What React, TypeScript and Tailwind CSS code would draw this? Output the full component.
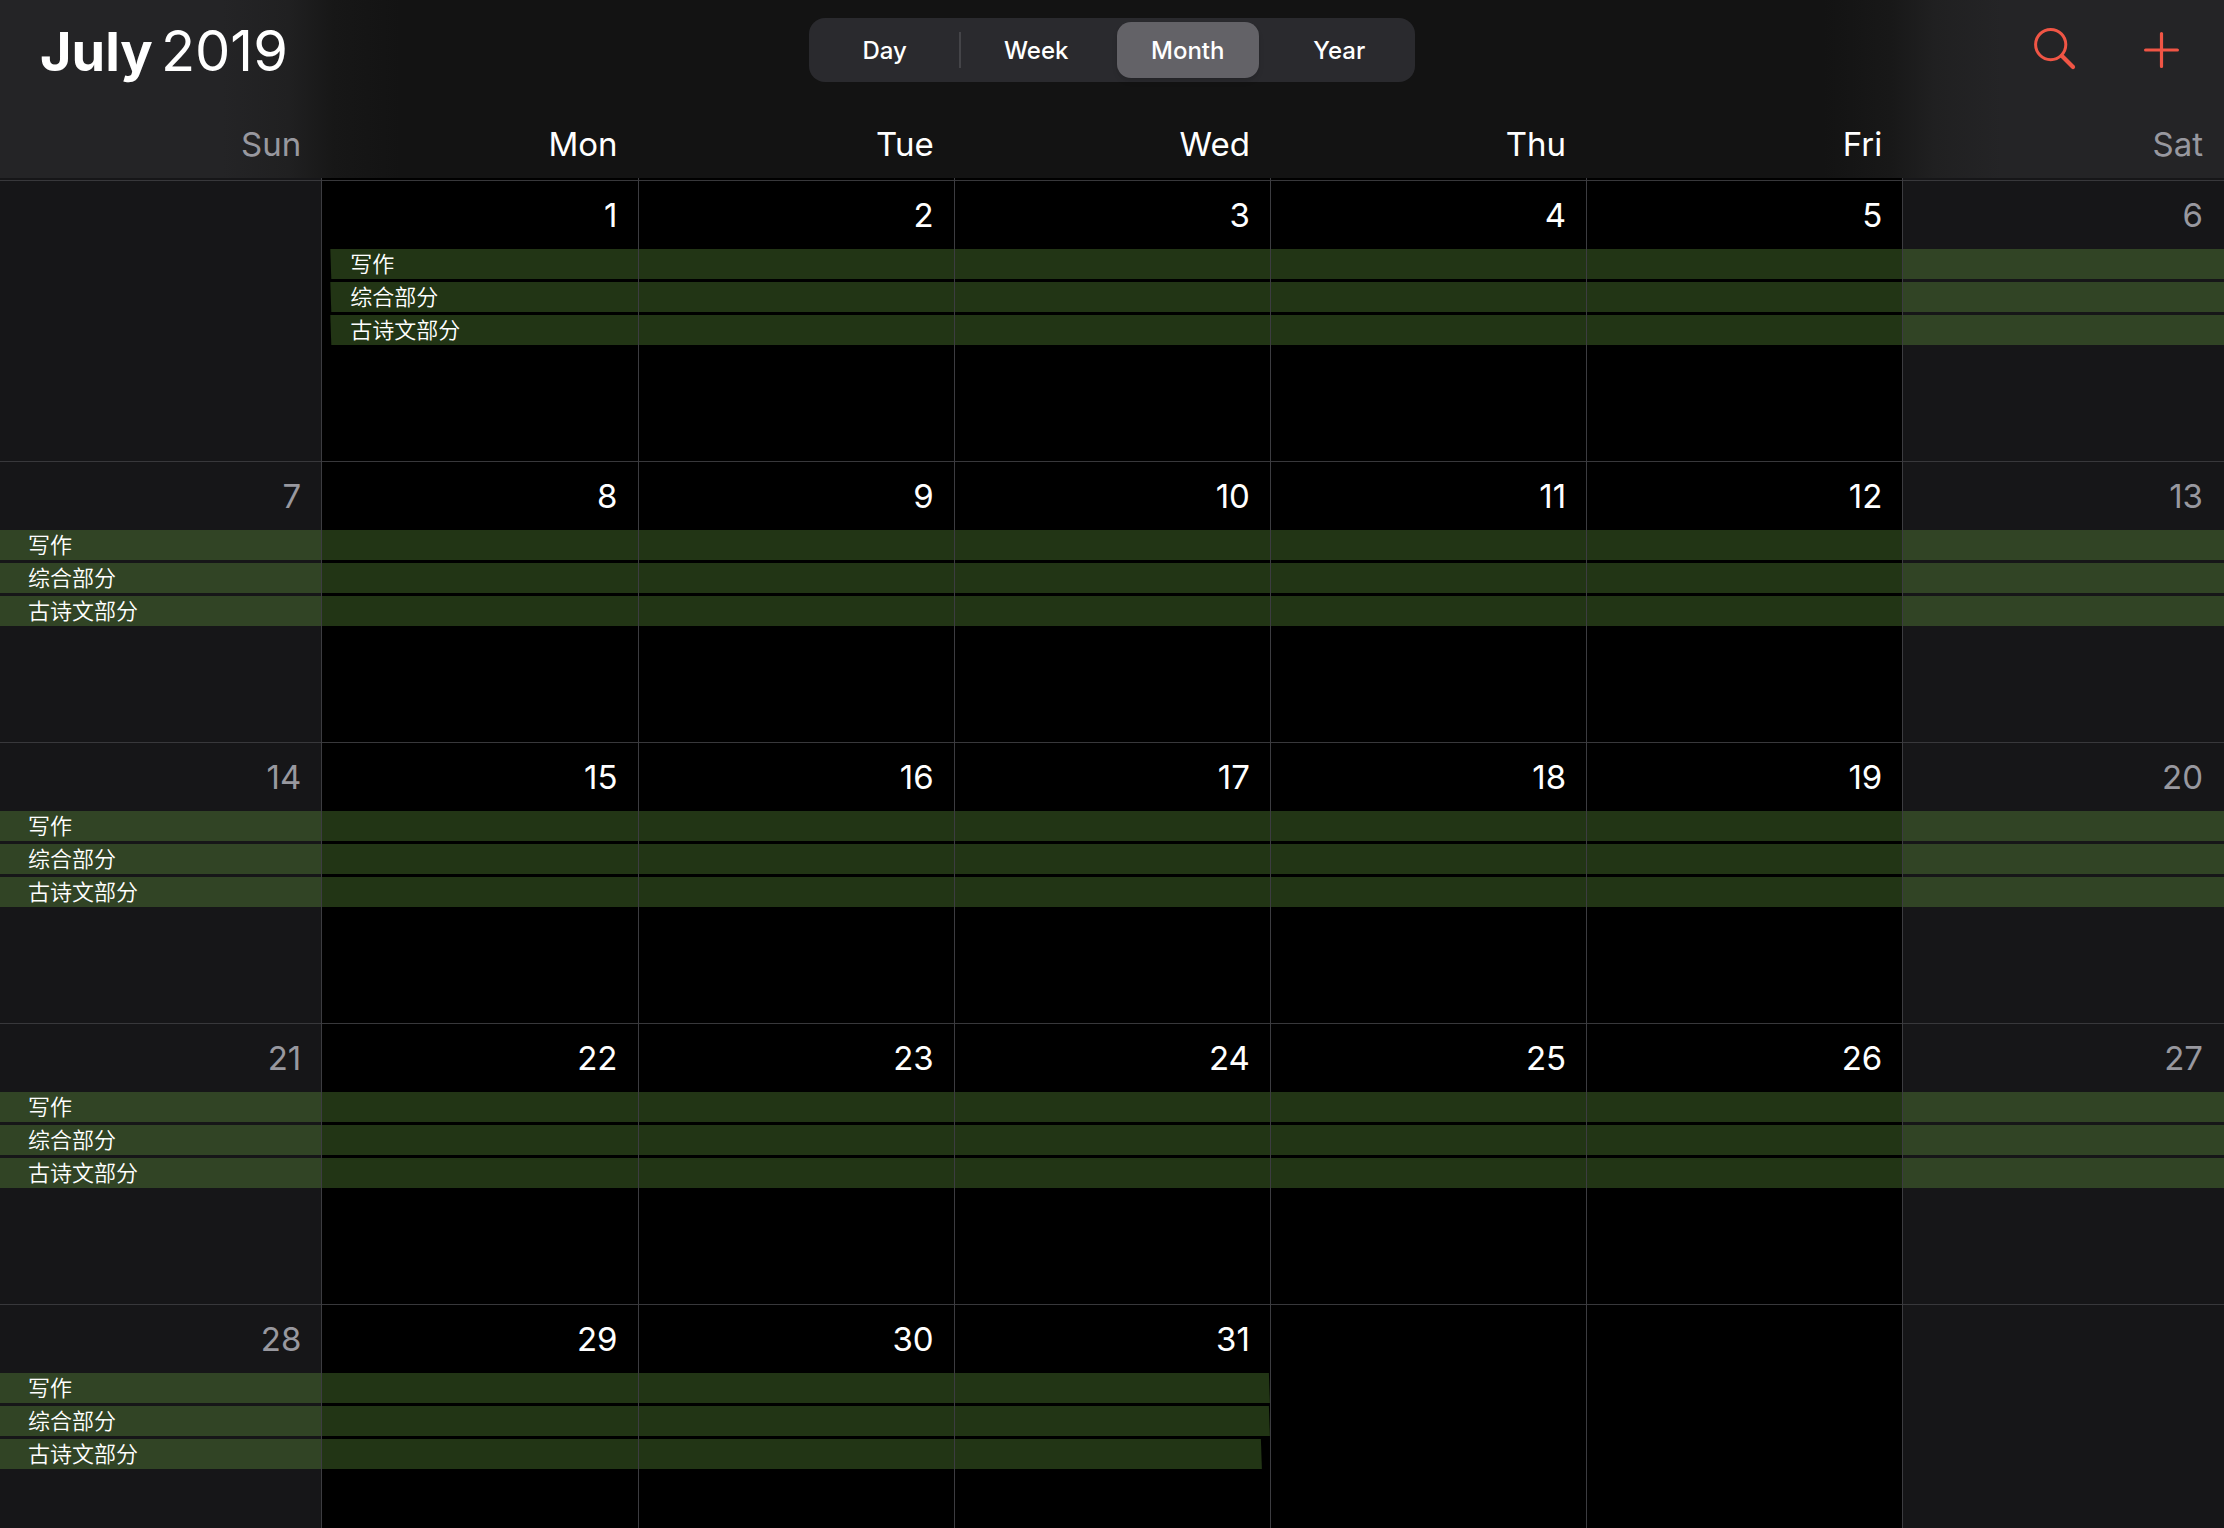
import React from "react";

type CalendarEvent = { title: string; start: number; end: number };

const weekdays = ["Sun", "Mon", "Tue", "Wed", "Thu", "Fri", "Sat"];
const views = ["Day", "Week", "Month", "Year"];
const events: CalendarEvent[] = [
  { title: "写作", start: 1, end: 31 },
  { title: "综合部分", start: 1, end: 31 },
  { title: "古诗文部分", start: 1, end: 31 },
];
const daysInMonth = 31;
const weekStarts = [0, 7, 14, 21, 28];

const columns = "grid grid-cols-[3223fr_repeat(5,3162fr)_3207fr]";

function isWeekend(day: number) {
  return day === 0 || day === 6;
}

function ViewSwitcher() {
  return (
    <div className="grid h-16 w-[606px] grid-cols-4 rounded-[16px] bg-[#2a2a2e] text-[24px] font-medium">
      {views.map((view) => (
        <button
          key={view}
          type="button"
          aria-pressed={view === "Month"}
          className={
            view === "Month"
              ? "mx-[5px] my-1 rounded-[14px] bg-[#636267] pt-[2px] shadow-md"
              : view === "Day"
                ? "relative pt-[2px] after:absolute after:right-0 after:top-[14px] after:h-9 after:w-[2px] after:bg-[#444448]"
                : "pt-[2px]"
          }
        >
          {view}
        </button>
      ))}
    </div>
  );
}

function Header() {
  return (
    <header className="bg-[linear-gradient(90deg,#242426_0,#242426_10%,#202021_13%,#171717_15%,#131313_18%,#131313_82%,#181818_85%,#202021_87%,#242426_90%,#242426_100%)]">
      <div className="grid h-[100px] grid-cols-[1fr_auto_1fr] items-center px-10">
        <h1 className="flex items-baseline gap-2 pt-[2px] text-[54px] leading-none">
          <span className="font-bold">July</span> <span className="text-[56px] font-normal">2019</span>
        </h1>
        <ViewSwitcher />
        <div className="flex items-center justify-end gap-16 text-[#f05545]">
          <button type="button" aria-label="Search">
            <svg className="size-11" viewBox="0 0 44 44" fill="none" stroke="currentColor" strokeLinecap="round">
              <circle cx="18.7" cy="16.6" r="15.1" strokeWidth="3" />
              <path d="M30 28 41 39" strokeWidth="4.2" />
            </svg>
          </button>
          <button type="button" aria-label="Add event">
            <svg className="size-11" viewBox="0 0 44 44" fill="none" stroke="currentColor" strokeLinecap="round" strokeWidth="3.2">
              <path d="M21.500 5.600V38.400M5.600 22H37.400" />
            </svg>
          </button>
        </div>
      </div>
      <div className={`${columns} h-[78px] text-right text-[33px] leading-[88px]`}>
        {weekdays.map((name, day) => (
          <div key={name} className={isWeekend(day) ? "pr-[21px] text-[#98989f]" : "pr-[21px]"}>
            {name}
          </div>
        ))}
      </div>
    </header>
  );
}

function Week({ offset }: { offset: number }) {
  return (
    <section className={`${columns} h-[281px] shrink-0 grid-rows-[66px_30px_30px_30px_1fr] gap-y-[3px]`}>
      {weekdays.map((name, day) => {
        const date = offset + day;
        return (
          <div
            key={name}
            style={{ gridColumn: day + 1 }}
            className={`row-span-full row-start-1 border-t border-[#38383b] pr-[21px] pt-[10px] text-right text-[33px] leading-[48px] ${
              isWeekend(day) ? "bg-[#161618] text-[#98989f]" : "bg-black"
            }`}
          >
            {date >= 1 && date <= daysInMonth ? date : ""}
          </div>
        );
      })}
      {events.map((event, index) => {
        const first = Math.max(event.start - offset, 0);
        const last = Math.min(event.end - offset, 6);
        const starts = offset + first === event.start;
        const ends = offset + last === event.end;
        const tail = index === events.length - 1 ? "mr-[9px]" : "mr-px";
        return (
          <div
            key={event.title}
            style={{ gridColumn: `${first + 1} / ${last + 2}`, gridRow: index + 2 }}
            className={`bg-[#71b146]/30 text-[22px] font-[350] leading-[30px] ${
              starts ? "ml-2 pl-5 [clip-path:polygon(0_0,100%_0,100%_100%,1px_100%)]" : "pl-7"
            } ${ends ? `${tail} [clip-path:polygon(0_0,calc(100%_-_1px)_0,100%_100%,0_100%)]` : ""}`}
          >
            {event.title}
          </div>
        );
      })}
      {/* Column rules run over the event bars. */}
      {weekdays.slice(0, 6).map((name, day) => (
        <div
          key={name}
          aria-hidden="true"
          style={{ gridColumn: day + 1 }}
          className="z-10 row-span-full row-start-1 border-r border-[#3c3c40]"
        />
      ))}
    </section>
  );
}

export default function App() {
  return (
    <main className="flex h-screen flex-col overflow-hidden bg-black font-['Inter','Noto_Sans_CJK_SC',sans-serif] text-white">
      <Header />
      <div className={`${columns} h-[2px] shrink-0`}>
        {weekdays.map((name, day) => (
          <div
            key={name}
            className={`${day < 6 ? "border-r border-[#3c3c40]" : ""} ${isWeekend(day) ? "bg-[#161618]" : ""}`}
          />
        ))}
      </div>
      {weekStarts.map((offset) => (
        <Week key={offset} offset={offset} />
      ))}
    </main>
  );
}
